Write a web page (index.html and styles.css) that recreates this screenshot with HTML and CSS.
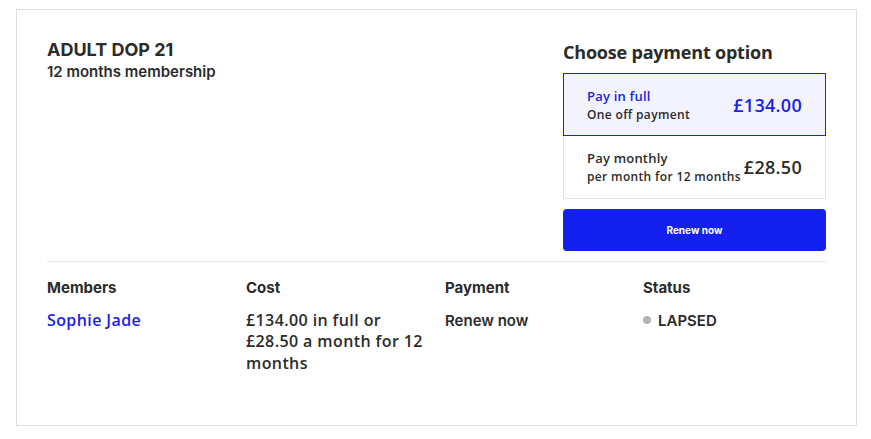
FILE: index.html
```html
<!DOCTYPE html>
<html lang="en">
<head>
    <meta charset="UTF-8">
    <meta name="viewport" content="width=device-width, initial-scale=1.0">
    <title>Membership renewal</title>
    <link rel="stylesheet" href="styles.css">
</head>
<body>
    <div class="card">
        <div class="top">
            <div class="plan">
                <h2>ADULT DOP 21</h2>
                <p>12 months membership</p>
            </div>

            <div class="payment">
                <h3>Choose payment option</h3>
                <label class="option selected">
                    <span class="option-text">
                        <span class="option-title">Pay in full</span>
                        <span class="option-sub">One off payment</span>
                    </span>
                    <span class="price">£134.00</span>
                </label>
                <label class="option">
                    <span class="option-text">
                        <span class="option-title">Pay monthly</span>
                        <span class="option-sub">per month for 12 months</span>
                    </span>
                    <span class="price">£28.50</span>
                </label>
                <button class="renew">Renew now</button>
            </div>
        </div>

        <div class="details">
            <div class="head">Members</div>
            <div class="head">Cost</div>
            <div class="head">Payment</div>
            <div class="head">Status</div>

            <div class="member">Sophie Jade</div>
            <div class="cost">£134.00 in full or £28.50 a month for 12 months</div>
            <div class="value">Renew now</div>
            <div class="value status"><span class="dot"></span>LAPSED</div>
        </div>
    </div>
</body>
</html>
```

FILE: styles.css
```css
body {
    margin: 9px 14px 0 16px;
    font-family: Inter, "Liberation Sans", sans-serif;
    color: #2b2b2b;
    background: #ffffff;
}

.card {
    border: 1px solid #dedede;
    padding: 28px 30px 55px 30px;
    height: 417px;
    box-sizing: border-box;
}

.top {
    display: flex;
    justify-content: space-between;
    padding-bottom: 10px;
    border-bottom: 1px solid #e3e3e3;
}

.plan h2 {
    margin: 0;
    font-size: 18px;
    font-weight: 700;
    line-height: 24px;
}

.plan p {
    margin: 0;
    font-size: 15px;
    font-weight: 600;
    line-height: 20px;
}

.payment {
    width: 263px;
    font-family: "Open Sans", Lato, sans-serif;
}

.payment h3 {
    margin: 1px 0 8px 0;
    font-size: 18px;
    font-weight: 700;
    line-height: 26px;
    letter-spacing: -0.2px;
}

.option {
    display: flex;
    justify-content: space-between;
    align-items: center;
    height: 63px;
    padding: 0 23px;
    border: 1px solid #e6e6e6;
    box-sizing: border-box;
}

.option + .option {
    border-top: none;
}

.option.selected {
    background: #f3f3fd;
    border-color: #1a22e8;
}

.option-text {
    display: flex;
    flex-direction: column;
}

.option-title {
    font-size: 13px;
    font-weight: 600;
    line-height: 20px;
    letter-spacing: 0.2px;
}

.option-sub {
    font-size: 12px;
    font-weight: 600;
    line-height: 18px;
    letter-spacing: 0.35px;
}

.selected .option-title,
.selected .price {
    color: #1a22e8;
}

.price {
    font-size: 18px;
    font-weight: 600;
    letter-spacing: 0.3px;
}

.renew {
    display: block;
    width: 100%;
    height: 42px;
    margin-top: 10px;
    background: #1420ee;
    color: #ffffff;
    border: none;
    border-radius: 4px;
    font-family: Inter, "Liberation Sans", sans-serif;
    font-size: 10px;
    font-weight: 700;
    cursor: pointer;
}

.details {
    display: grid;
    grid-template-columns: 199px 199px 198px 1fr;
    row-gap: 11px;
    padding-top: 15px;
    font-size: 15px;
    line-height: 21.5px;
}

.head {
    font-weight: 700;
}

.member,
.cost {
    font-family: "Open Sans", Lato, sans-serif;
    font-size: 16px;
    font-weight: 600;
    letter-spacing: 0.4px;
}

.member {
    color: #1a22e8;
}

.cost {
    padding-right: 22px;
}

.value {
    font-weight: 600;
}

.status {
    display: flex;
    align-items: center;
    align-self: start;
}

.dot {
    width: 8px;
    height: 8px;
    margin-right: 7px;
    border-radius: 50%;
    background: #b3b3b3;
}
```
